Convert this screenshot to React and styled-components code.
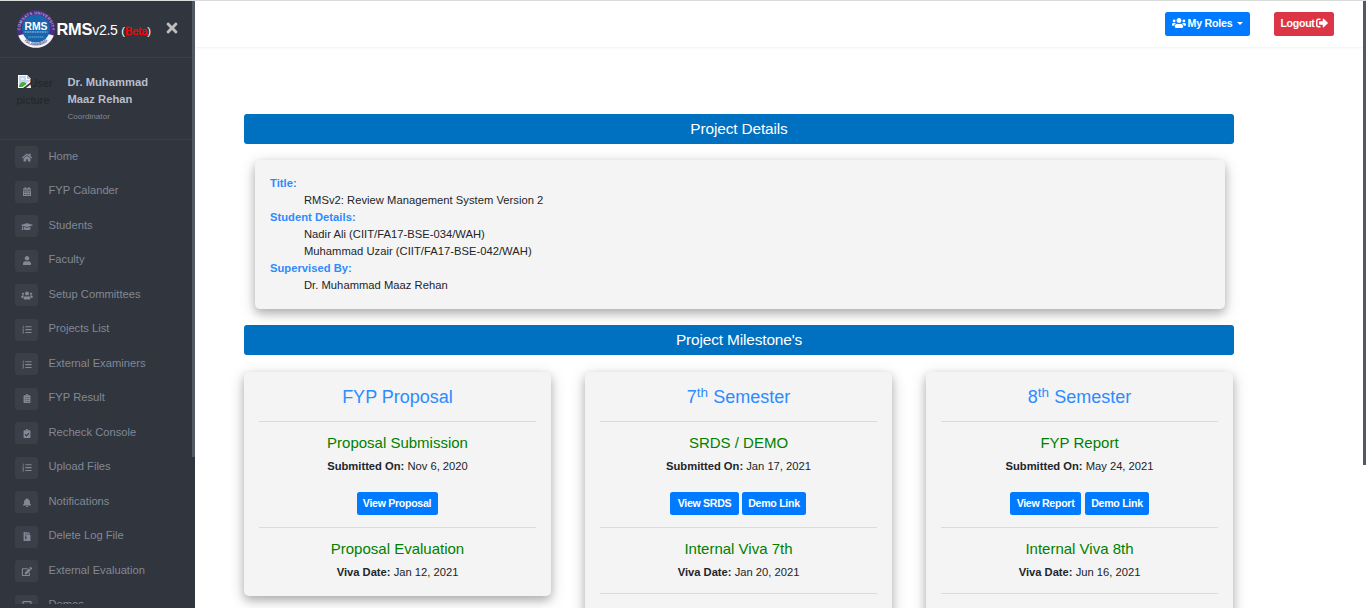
import React from "react";
import styled, { createGlobalStyle } from "styled-components";
import {
  FaHome, FaCalendarAlt, FaGraduationCap, FaUser, FaUsers, FaListOl, FaClipboardList,
  FaClipboardCheck, FaBell, FaFileArchive, FaEdit, FaLaptop, FaTimes, FaSignOutAlt,
} from "react-icons/fa";

const Global = createGlobalStyle`
  *, *::before, *::after { box-sizing: border-box; }
  html, body { margin: 0; height: 608px; overflow: hidden; }
  body {
    font-family: "Liberation Sans", Arial, sans-serif;
    font-size: 11.2px; line-height: 17px; color: #212529; background: #fff;
  }
`;

const Page = styled.div`
  display: flex;
  height: 608px;
  overflow: hidden;
  border-top: 1px solid #dadcdc;
`;

const Sidebar = styled.aside`
  display: flex;
  width: 195px;
  flex: none;
  background: #31353d;
  overflow: hidden;
`;
const SidebarBody = styled.div`
  width: 192px;
  flex: none;
`;
const Scrollbar = styled.div`
  width: 3px;
  flex: none;
  height: ${(p) => p.$height}px;
  background: #525965;
`;

const Brand = styled.div`
  height: 57px;
  display: flex;
  align-items: center;
  padding: 0 12px 0 16px;
  border-bottom: 1px solid #3a3f48;
`;
const BrandName = styled.div`
  flex: 1;
  padding: 1px 0 0 0.5px;
  color: #fff;
  font-size: 14px;
  line-height: 24px;
  white-space: nowrap;
  letter-spacing: -0.25px;
`;
const BrandStrong = styled.b`
  font-size: 16.4px;
`;
const Small = styled.span`
  font-size: 11.2px;
  letter-spacing: -0.15px;
`;
const Beta = styled.span`
  color: #f00;
  -webkit-text-stroke: 0.3px #f00;
`;
const CloseIcon = styled(FaTimes)`
  font-size: 16px;
  color: #bdbdbd;
  margin-top: -2px;
`;

const Profile = styled.div`
  height: 82px;
  display: flex;
  padding: 16px 16px 0;
  border-bottom: 1px solid #3a3f48;
`;
const Picture = styled.div`
  width: 37px;
  flex: none;
  margin: 0 14.5px 0 0;
  padding-left: 0.5px;
  font-size: 11px;
  color: #212529;
  overflow: hidden;

  svg { vertical-align: -3px; margin-right: -3px; }
`;
const ProfileText = styled.div`
  color: #b8bfce;
  font-weight: bold;
  letter-spacing: 0.03px;
`;
const Role = styled.div`
  font-size: 8px;
  font-weight: normal;
  color: #818896;
  letter-spacing: 0.05px;
`;

const Menu = styled.nav`
  height: 464px;
  overflow: hidden;
  display: flex;
  flex-direction: column;
`;
const MenuItem = styled.a`
  height: 34.5px;
  flex: none;
  display: flex;
  align-items: center;
  padding-left: 15px;
  color: #818896;
`;
const MenuLabel = styled.span`
  padding-bottom: 2px;
`;
const IconTile = styled.span`
  width: 23px;
  height: 22.4px;
  margin-right: 10.5px;
  border-radius: 3px;
  background: #3a3f48;
  display: flex;
  align-items: center;
  justify-content: center;

  svg { width: 12px; height: 9.2px; }
`;

const Main = styled.main`
  flex: 1;
  display: flex;
  flex-direction: column;
`;
const Topbar = styled.header`
  height: 46px;
  flex: none;
  display: flex;
  justify-content: flex-end;
  align-items: center;
  gap: 24px;
  padding-right: 29px;
  box-shadow: 0 1px 2px rgba(0, 0, 0, 0.06);
`;
const Button = styled.button`
  height: ${(p) => p.$height || 23}px;
  width: ${(p) => p.$width}px;
  border: 0;
  border-radius: 2.5px;
  padding: 0 0 ${(p) => (p.$height ? 2 : 0)}px;
  display: flex;
  align-items: center;
  justify-content: center;
  gap: ${(p) => p.$gap ?? 1}px;
  background: ${(p) => (p.$danger ? "#dc3545" : "#007bff")};
  color: #fff;
  font: bold 10.6px/17px "Liberation Sans", Arial, sans-serif;
  letter-spacing: ${(p) => p.$spacing ?? -0.3}px;
  white-space: nowrap;
`;
const Caret = styled.span`
  margin-left: 3px;
  border: 3px solid transparent;
  border-top-color: #fff;
  border-bottom: 0;
`;

const Content = styled.div`
  width: 990px;
  margin: 67px 0 0 49px;
`;
const Banner = styled.h2`
  margin: 0;
  height: 30px;
  border-radius: 3px;
  background: #0070c1;
  color: #fff;
  font-size: 15.4px;
  font-weight: normal;
  line-height: 30px;
  text-align: center;
  letter-spacing: -0.13px;
`;
const Card = styled.section`
  border-radius: 5px;
  background: #f4f4f4;
  box-shadow: 0 4px 8px rgba(0, 0, 0, 0.2), 0 4px 16px rgba(0, 0, 0, 0.19);
`;
const DetailsCard = styled(Card)`
  height: 149px;
  margin: 16px 9px 16px 11px;
  padding: 15px;
`;
const Details = styled.dl`
  margin: 0;
  letter-spacing: 0.03px;
`;
const Term = styled.dt`
  font-weight: bold;
  color: #2d8bff;
`;
const Value = styled.dd`
  margin: 0 0 0 34px;
`;

const Milestones = styled.div`
  display: grid;
  grid-template-columns: repeat(3, 307px);
  gap: 34px;
  align-items: start;
  margin-top: 17px;
`;
const MilestoneCard = styled(Card)`
  height: ${(p) => (p.$open ? 290 : 224)}px;
  padding: 14px 15px;
  text-align: center;
`;
const MilestoneTitle = styled.h3`
  margin: 0;
  height: 35px;
  color: #2d8bff;
  font-size: 18px;
  font-weight: normal;
  line-height: 22px;

  sup { font-size: 13.5px; line-height: 0; position: relative; top: -6px; vertical-align: baseline; }
`;
const Stage = styled.div`
  height: ${(p) => (p.$short ? 66 : 106)}px;
  border-top: 1px solid #dbdbdb;
  padding-top: 11px;
`;
const StageTitle = styled.h4`
  margin: 0 0 5px;
  color: #008000;
  font-size: 15px;
  font-weight: normal;
  line-height: 20px;
`;
const Actions = styled.div`
  display: flex;
  justify-content: center;
  gap: ${(p) => p.$gap || 3}px;
  margin-top: 17px;
  padding-right: ${(p) => (p.$gap ? 0 : 1)}px;
`;

const menu = [
  [FaHome, "Home"],
  [FaCalendarAlt, "FYP Calander"],
  [FaGraduationCap, "Students"],
  [FaUser, "Faculty"],
  [FaUsers, "Setup Committees"],
  [FaListOl, "Projects List"],
  [FaListOl, "External Examiners"],
  [FaClipboardList, "FYP Result"],
  [FaClipboardCheck, "Recheck Console"],
  [FaListOl, "Upload Files"],
  [FaBell, "Notifications"],
  [FaFileArchive, "Delete Log File"],
  [FaEdit, "External Evaluation"],
  [FaLaptop, "Demos"],
];

const milestones = [
  {
    title: "FYP Proposal",
    stage: "Proposal Submission", date: "Nov 6, 2020",
    actions: [["View Proposal", 81]],
    viva: "Proposal Evaluation", vivaDate: "Jan 12, 2021",
  },
  {
    title: <>7<sup>th</sup> Semester</>, open: true,
    stage: "SRDS / DEMO", date: "Jan 17, 2021",
    actions: [["View SRDS", 69], ["Demo Link", 64]],
    viva: "Internal Viva 7th", vivaDate: "Jan 20, 2021",
  },
  {
    title: <>8<sup>th</sup> Semester</>, open: true, gap: 4,
    stage: "FYP Report", date: "May 24, 2021",
    actions: [["View Report", 71], ["Demo Link", 64]],
    viva: "Internal Viva 8th", vivaDate: "Jun 16, 2021",
  },
];

function Logo() {
  return (
    <svg width="40" height="40" viewBox="0 0 40 40">
      <defs>
        <path id="ringTop" d="M5 26 A15.8 15.8 0 1 1 35 26" />
        <path id="ringBottom" d="M6 29.5 A17.3 17.3 0 0 0 34 29.5" />
      </defs>
      <circle cx="20" cy="20" r="19" fill="#4b2e83" />
      <path d="M2.2 26.5 A19 19 0 0 0 37.8 26.5 L32 25 A13 13 0 0 1 8 25 Z" fill="#f3f4f8" />
      <circle cx="20" cy="19.5" r="14" fill="#1765ad" />
      <text fontSize="4" fontWeight="bold" fill="#b3a6cf" textAnchor="middle">
        <textPath href="#ringTop" startOffset="50%" textLength="50">COMSATS UNIVERSITY</textPath>
      </text>
      <text fontSize="4.2" fontWeight="bold" fill="#4b4b78" textAnchor="middle">
        <textPath href="#ringBottom" startOffset="50%">ISLAMABAD</textPath>
      </text>
      <text x="20" y="21" fontSize="10" fontWeight="bold" fill="#fff" textAnchor="middle" textLength="23" lengthAdjust="spacingAndGlyphs">RMS</text>
      <path d="M8.5 23h23" stroke="#a9cbe6" strokeWidth="0.9" strokeDasharray="2 0.5" />
      <path d="M12 28h16" stroke="#7ba9d2" strokeWidth="1" strokeDasharray="1.5 0.5" />
    </svg>
  );
}

function BrokenImage() {
  return (
    <svg width="16" height="16" viewBox="0 0 16 16">
      <path d="M1 1h9l4 4v3l-8 6H1z" fill="#fff" />
      <path d="M2 2h7v4h4v1l-8 6H2z" fill="#c1d8f5" />
      <path d="M4 5.5a1.5 1.5 0 0 1 3 0z" fill="#fff" />
      <path d="M2 13c0-3 2-5 4.5-5 1.500 0 2.500 1 3 2l-4 3z" fill="#4fa83d" />
      <path d="M10 1l4 4h-4z" fill="#b9bec7" />
      <path d="M14 10v4H9z" fill="#eef1f4" />
    </svg>
  );
}

export default function App() {
  return (
    <Page>
      <Global />
      <Sidebar>
        <SidebarBody>
          <Brand>
            <Logo />
            <BrandName>
              <BrandStrong>RMS</BrandStrong>v2.5 <Small>(<Beta>Beta</Beta>)</Small>
            </BrandName>
            <CloseIcon />
          </Brand>
          <Profile>
            <Picture><BrokenImage />User picture</Picture>
            <ProfileText>
              Dr. Muhammad<br />Maaz Rehan
              <Role>Coordinator</Role>
            </ProfileText>
          </Profile>
          <Menu>
            {menu.map(([Icon, label]) => (
              <MenuItem key={label}>
                <IconTile><Icon /></IconTile>
                <MenuLabel>{label}</MenuLabel>
              </MenuItem>
            ))}
          </Menu>
        </SidebarBody>
        <Scrollbar $height={456} />
      </Sidebar>
      <Main>
        <Topbar>
          <Button $width={85} $height={24} $spacing={-0.2} $gap={2}>
            <FaUsers size={14} /> My Roles <Caret />
          </Button>
          <Button $width={60} $height={24} $danger $spacing={-0.3}>
            Logout <FaSignOutAlt size={12} />
          </Button>
        </Topbar>
        <Content>
          <Banner>Project Details</Banner>
          <DetailsCard>
            <Details>
              <Term>Title:</Term>
              <Value>RMSv2: Review Management System Version 2</Value>
              <Term>Student Details:</Term>
              <Value>Nadir Ali (CIIT/FA17-BSE-034/WAH)</Value>
              <Value>Muhammad Uzair (CIIT/FA17-BSE-042/WAH)</Value>
              <Term>Supervised By:</Term>
              <Value>Dr. Muhammad Maaz Rehan</Value>
            </Details>
          </DetailsCard>
          <Banner>Project Milestone's</Banner>
          <Milestones>
            {milestones.map((m) => (
              <MilestoneCard key={m.stage} $open={m.open}>
                <MilestoneTitle>{m.title}</MilestoneTitle>
                <Stage>
                  <StageTitle>{m.stage}</StageTitle>
                  <b>Submitted On:</b> {m.date}
                  <Actions $gap={m.gap}>
                    {m.actions.map(([label, width]) => (
                      <Button key={label} $width={width}>{label}</Button>
                    ))}
                  </Actions>
                </Stage>
                <Stage $short>
                  <StageTitle>{m.viva}</StageTitle>
                  <b>Viva Date:</b> {m.vivaDate}
                </Stage>
                {m.open && <Stage $short />}
              </MilestoneCard>
            ))}
          </Milestones>
        </Content>
      </Main>
      <Scrollbar $height={464} />
    </Page>
  );
}
